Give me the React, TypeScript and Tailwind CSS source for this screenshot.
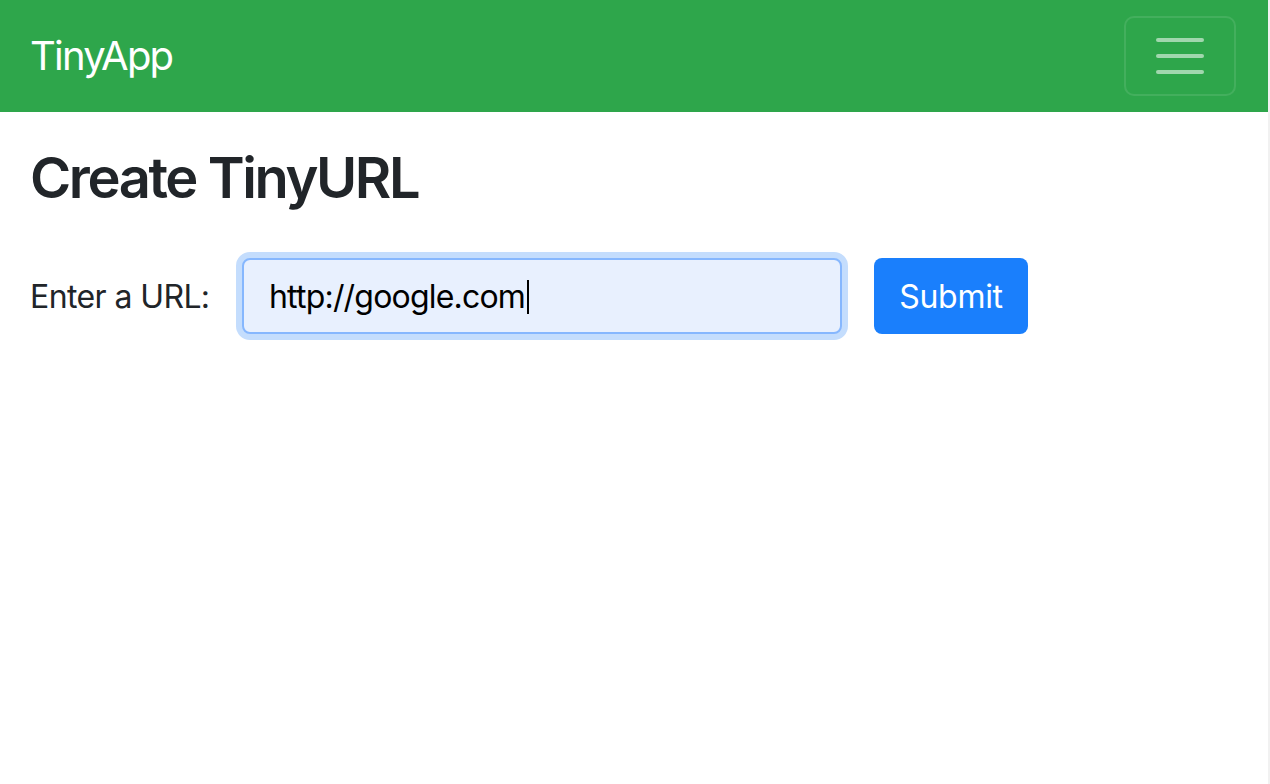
import { ReactElement } from "react";

export default function App(): ReactElement {
  return (
    <div className="min-h-[784px] bg-white border-r-2 border-[#f1f1f1] font-['Inter',sans-serif] text-[#212529]">
      <Navbar />
      <main className="pl-[30px] pt-[33px]">
        <h1 className="text-[56px] leading-[1.2] font-semibold tracking-[-2.4px]">
          Create TinyURL
        </h1>
        <CreateForm />
      </main>
    </div>
  );
}

function Navbar(): ReactElement {
  return (
    <nav className="h-[112px] bg-[#2ea64b] flex items-center justify-between pl-[30px] pr-[32px]">
      <span className="text-[40px] leading-none text-white tracking-[-1.8px]">TinyApp</span>
      <button
        type="button"
        aria-label="Toggle navigation"
        className="w-[112px] h-[80px] rounded-[10px] border-2 border-white/10 flex flex-col items-center justify-center gap-[12px]"
      >
        <span className="block w-[48px] h-[4px] rounded-full bg-white/55" />
        <span className="block w-[48px] h-[4px] rounded-full bg-white/55" />
        <span className="block w-[48px] h-[4px] rounded-full bg-white/55" />
      </button>
    </nav>
  );
}

function CreateForm(): ReactElement {
  return (
    <form className="mt-[46px] flex items-center" onSubmit={(e) => e.preventDefault()}>
      <label className="w-[212px] pt-[2px] text-[32px] leading-none tracking-[-0.6px]">Enter a URL:</label>
      {/* focused + autofilled input, caret drawn so it always shows */}
      <div className="w-[600px] h-[76px] rounded-[8px] border-2 border-[#86b7fe] bg-[#e8f0fe] ring-[6px] ring-[#c4ddfd] flex items-center pl-[25px] pt-[2px] text-[32px] text-black tracking-[-0.8px]">
        <span>http://google.com</span>
        <span className="block w-[2px] h-[34px] bg-black ml-[2px]" />
      </div>
      <button
        type="submit"
        className="ml-[32px] w-[154px] h-[76px] rounded-[8px] bg-[#1a7ffc] pt-[2px] text-white text-[32px] tracking-[-0.3px]"
      >
        Submit
      </button>
    </form>
  );
}
